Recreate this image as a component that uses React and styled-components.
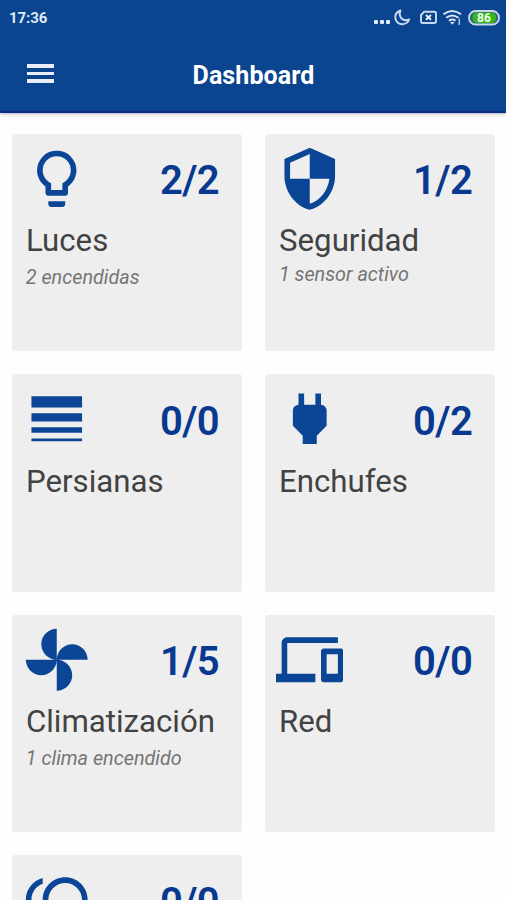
import styled, { createGlobalStyle } from "styled-components";

const GlobalStyle = createGlobalStyle`
    * {
        box-sizing: border-box;
    }

    html, body {
        margin: 0;
        padding: 0;
        height: 900px;
        overflow: hidden;
        background: #fefefe;
        font-family: Roboto, "Liberation Sans", sans-serif;
    }
`;

const Screen = styled.div`
    display: flex;
    flex-direction: column;
    width: 506px;
    height: 900px;
    overflow: hidden;
`;

const Header = styled.header`
    flex: none;
    height: 113px;
    background: #0b458f;
    border-bottom: 2px solid #0a2b88;
    box-shadow: 0 1px 3px rgba(0, 0, 0, 0.3);
    color: #fff;
`;

const StatusBar = styled.div`
    display: flex;
    align-items: center;
    justify-content: space-between;
    height: 35px;
    padding: 0 6px 0 9px;
`;

const Clock = styled.span`
    font-size: 15px;
    font-weight: 700;
    letter-spacing: -0.1px;
    color: #dfe9f8;
`;

const StatusIcons = styled.svg`
    display: block;
    width: 128px;
    height: 24px;
    margin-top: -1px;
`;

const BatteryText = styled.text`
    font-size: 12px;
    font-weight: 700;
    fill: #f2fff0;
`;

const Toolbar = styled.div`
    display: grid;
    grid-template-columns: 80px 1fr 80px;
    align-items: center;
    height: 78px;
`;

const MenuButton = styled.button`
    display: flex;
    flex-direction: column;
    gap: 4px;
    width: 27px;
    margin: -1px 0 0 26.5px;
    padding: 0;
    border: 0;
    background: none;
`;

const MenuLine = styled.span`
    height: 3.5px;
    background: #e9effa;
`;

const Title = styled.h1`
    margin: 3px 0 0 1px;
    font-size: 25px;
    font-weight: 700;
    line-height: 30px;
    letter-spacing: 0.1px;
    text-align: center;
`;

const Cards = styled.main`
    display: grid;
    grid-template-columns: 230.5px 230.5px;
    grid-auto-rows: 217.5px;
    gap: 23px 22.6px;
    padding: 20.6px 11.6px 0;
`;

const Card = styled.section`
    padding: 11px 23px 0 11.2px;
    border-radius: 3px;
    background: #eeeeee;
`;

const CardTop = styled.div`
    display: flex;
    align-items: center;
    justify-content: space-between;
    height: 67.5px;
    color: #0b4595;
`;

const CardIcon = styled.svg`
    width: 67.5px;
    height: 67.5px;
    fill: currentColor;
`;

const Count = styled.span`
    margin-top: 6px;
    font-size: 40px;
    font-weight: 600;
    line-height: 46px;
    letter-spacing: -0.6px;
    color: #08388f;
`;

const CardName = styled.h2`
    margin: 10px 0 0 3.2px;
    font-size: 31.2px;
    font-weight: 400;
    line-height: 38px;
    color: #424242;
    white-space: nowrap;
`;

const CardInfo = styled.p`
    margin: ${({ $gap }) => $gap}px 0 0 3px;
    font-size: 19.8px;
    font-style: italic;
    font-weight: 400;
    line-height: 24px;
    color: #757575;
`;

const icons = {
    bulb: "M12,2A7,7 0 0,1 19,9C19,11.38 17.81,13.47 16,14.74V17A1,1 0 0,1 15,18H9A1,1 0 0,1 8,17V14.74C6.19,13.47 5,11.38 5,9A7,7 0 0,1 12,2M9,21V20H15V21A1,1 0 0,1 14,22H10A1,1 0 0,1 9,21M12,4A5,5 0 0,0 7,9C7,11.05 8.23,12.81 10,13.58V16H14V13.58C15.77,12.81 17,11.05 17,9A5,5 0 0,0 12,4Z",
    shield: "M12,12H19C18.47,16.11 15.72,19.78 12,20.92V12H5V6.3L12,3.19M12,1L3,5V11C3,16.55 6.84,21.73 12,23C17.16,21.73 21,16.55 21,11V5L12,1Z",
    blinds: "M3,17H21V15H3V17M3,20H21V19H3V20M3,13H21V10H3V13M3,4V8H21V4H3Z",
    plug: "M16,7V3H14V7H10V3H8V7H8C7,7 6,8 6,9V14.5L9.5,18V21H14.5V18L18,14.5V9C18,8 17,7 16,7Z",
    fan: "M12 12c0-3 2.5-5.5 5.5-5.5S23 9 23 12H12zm0 0c0 3-2.5 5.5-5.5 5.5S1 15 1 12h11zm0 0c-3 0-5.5-2.5-5.5-5.5S9 1 12 1v11zm0 0c3 0 5.5 2.5 5.5 5.5S15 23 12 23V12z",
    devices: "M4 6h18V4H4c-1.1 0-2 .9-2 2v11H0v3h14v-3H4V6zm19 2h-6c-.55 0-1 .45-1 1v10c0 .55.45 1 1 1h6c.55 0 1-.45 1-1V9c0-.55-.45-1-1-1zm-1 9h-4v-7h4v7z",
    rings: "M15 4c-4.42 0-8 3.58-8 8s3.58 8 8 8 8-3.58 8-8-3.58-8-8-8zm0 14c-3.31 0-6-2.69-6-6s2.69-6 6-6 6 2.69 6 6-2.69 6-6 6zM3 12c0-2.61 1.67-4.83 4-5.65V4.26C3.55 5.15 1 8.27 1 12s2.55 6.85 6 7.74v-2.09c-2.33-.82-4-3.04-4-5.65z",
};

const cards = [
    { icon: "bulb", count: "2/2", name: "Luces", info: "2 encendidas", gap: 6 },
    { icon: "shield", count: "1/2", name: "Seguridad", info: "1 sensor activo", gap: 3 },
    { icon: "blinds", count: "0/0", name: "Persianas" },
    { icon: "plug", count: "0/2", name: "Enchufes" },
    { icon: "fan", count: "1/5", name: "Climatización", info: "1 clima encendido", gap: 6 },
    { icon: "devices", count: "0/0", name: "Red" },
    { icon: "rings", count: "0/0" },
];

function Status() {
    return (
        <StatusIcons viewBox="372 5 128 24">
            <g fill="#e4ecfa">
                <rect x="374" y="20" width="4" height="4" rx="1" />
                <rect x="380" y="20" width="4" height="4" rx="1" />
                <rect x="386" y="20" width="4" height="4" rx="1" />
            </g>
            <g fill="none" stroke="#cbdaf2" strokeWidth="1.9" strokeLinejoin="round">
                <path d="M400.5 10.5C396.5 12 394.8 15 395.3 18.3C396 22 399 24.3 402.3 24.2C405.6 24 408.2 22.3 409.2 19.5C405.5 20.8 402.2 19.9 400.6 17.2C399.3 15 399.4 12.6 400.5 10.5Z" />
                <path d="M424.3 11.7H434.3Q436 11.7 436 13.4V21.3Q436 23 434.3 23H422.7Q421 23 421 21.3V15Z" />
                <path d="M426 15L431 19.7M431 15L426 19.7" stroke="#edf3fc" />
            </g>
            <g fill="none" stroke="#d9e5f7" strokeWidth="2">
                <path d="M443.5 14.3Q452.3 7.7 461 14.3" />
                <path d="M446.2 17.8Q452.3 13.2 458.4 17.8" />
                <path d="M449 20.8Q452.3 18.3 455.5 20.8" />
            </g>
            <path d="M450 22L452.3 24.8L454.5 22Z" fill="#d9e5f7" />
            <path d="M459.3 18.5V25" stroke="#b5c9ea" strokeWidth="1.4" />
            <rect x="469" y="11" width="30" height="13.5" rx="6.5" fill="#2e6a75" stroke="#c9d8ef" strokeWidth="1.8" />
            <rect x="472.5" y="12.5" width="23.5" height="10.5" rx="4.5" fill="#35b81c" />
            <BatteryText x="484" y="22" textAnchor="middle">86</BatteryText>
        </StatusIcons>
    );
}

export default function App() {
    return (
        <>
            <GlobalStyle />
            <Screen>
                <Header>
                    <StatusBar>
                        <Clock>17:36</Clock>
                        <Status />
                    </StatusBar>
                    <Toolbar>
                        <MenuButton aria-label="Menu">
                            <MenuLine />
                            <MenuLine />
                            <MenuLine />
                        </MenuButton>
                        <Title>Dashboard</Title>
                    </Toolbar>
                </Header>
                <Cards>
                    {cards.map((card) => (
                        <Card key={card.icon}>
                            <CardTop>
                                <CardIcon viewBox="0 0 24 24">
                                    <path d={icons[card.icon]} />
                                </CardIcon>
                                <Count>{card.count}</Count>
                            </CardTop>
                            {card.name && <CardName>{card.name}</CardName>}
                            {card.info && <CardInfo $gap={card.gap}>{card.info}</CardInfo>}
                        </Card>
                    ))}
                </Cards>
            </Screen>
        </>
    );
}
